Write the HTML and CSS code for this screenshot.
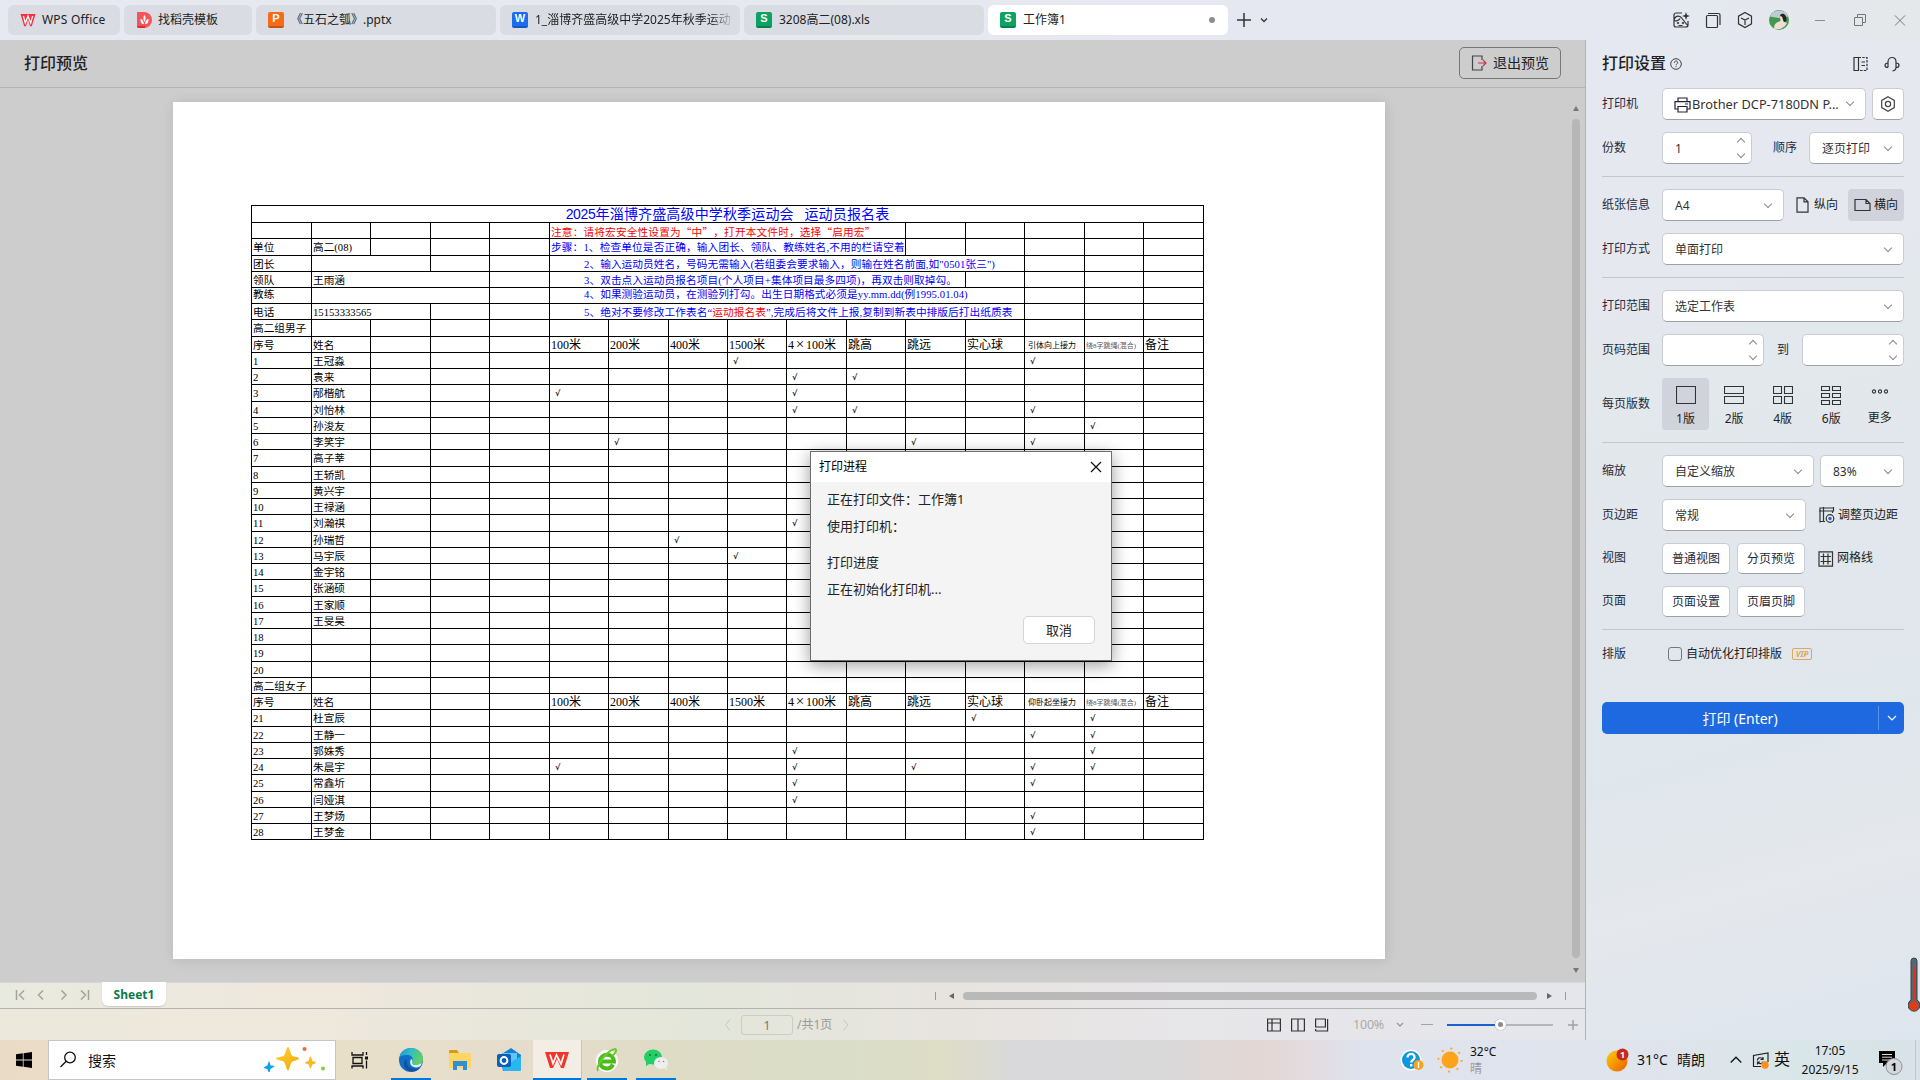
FILE: index.html
```html
<!DOCTYPE html>
<html lang="zh-CN">
<head>
<meta charset="utf-8">
<title>打印预览</title>
<link rel="stylesheet" href="styles.css">
</head>
<body>
<header class="tabbar">
  <div class="tab tab-home"><svg width="16" height="16" viewBox="0 0 16 16"><path d="M.5 2h15l-3.700 12.300h-1.800L8 7.500 6 14.300H4.200z" fill="#f5303d"/><path d="M3.400 4l1.900 7L8 4l2.700 7 1.900-7" fill="none" stroke="#fff" stroke-width="1.300"/></svg><span>WPS Office</span></div>
  <div class="tab tab-tpl"><svg width="16" height="16" viewBox="0 0 16 16"><path d="M1 0h7a8 8 0 0 1 0 16H3a2 2 0 0 1-2-2z" fill="#f4545a"/><path d="M1 14h8v2H3a2 2 0 0 1-2-2z" fill="#d93036"/><path d="M8.500 3c1.500 2 1.500 4 0 7-1.500-3-1.500-5 0-7zM4.500 7c2 0 3 2 3.500 5-3 0-3.500-2-3.500-5zm8 0c-2 0-3 2-3.500 5 3 0 3.500-2 3.500-5z" fill="#fff"/></svg><span>找稻壳模板</span></div>
  <div class="tab tab-doc"><i class="doc doc-p">P</i><span>《五石之瓠》.pptx</span></div>
  <div class="tab tab-doc"><i class="doc doc-w">W</i><span class="fade">1_淄博齐盛高级中学2025年秋季运动</span></div>
  <div class="tab tab-doc"><i class="doc doc-s">S</i><span>3208高二(08).xls</span></div>
  <div class="tab tab-doc active"><i class="doc doc-s">S</i><span>工作簿1</span><b class="dot"></b></div>
  <svg class="plus" width="40" height="16" viewBox="0 0 40 16" fill="none" stroke="#333"><path d="M8 1v14M1 8h14" stroke-width="1.500"/><path d="M25 6.500l3 3 3-3" stroke-width="1.300"/></svg>
  <div class="winctl">
    <svg width="18" height="18" viewBox="0 0 18 18" fill="none" stroke="#333" stroke-width="1.200"><path d="M10 2H4a2 2 0 0 0-2 2v10a2 2 0 0 0 2 2h10a2 2 0 0 0 2-2v-4M2 9.500C3 4 8 4 10 7.500l6 7.500M2 9.500c2 1 5 0 6-2M5 11.500l1 1 1-1M10 11.500l1 1 1-1M6.500 14.500h4"/><path d="M14 1l1 3 3 1-3 1-1 3-1-3-3-1 3-1z" fill="#333" stroke="none"/></svg>
    <svg width="18" height="18" viewBox="0 0 18 18" fill="none" stroke="#333" stroke-width="1.200"><rect x="2.500" y="4.500" width="11" height="12" rx="1"/><path d="M4 2.500h10.500a1.500 1.500 0 0 1 1.500 1.500V14"/></svg>
    <svg width="18" height="18" viewBox="0 0 18 18" fill="none" stroke="#333" stroke-width="1.200"><path d="M9 1.500l6.500 3.700v7.600L9 16.500l-6.500-3.700V5.200zM5 7l4 2 4-2M9 9v5"/></svg>
    <svg width="20" height="20" viewBox="0 0 20 20"><circle cx="10" cy="10" r="10" fill="#3f9a50"/><path d="M.8 6.500a10 10 0 0 1 18.400 0L10 8z" fill="#c0cad6"/><path d="M11 5c3-3 7 0 6.500 5.500L14 14l-1-4z" fill="#2b2022"/><path d="M11 6.500l2 0 1.500 5 3.500 1.500a10 10 0 0 1-13 5.500c0-3 1-5.500 4-6.500l2.500-1z" fill="#f0ded4"/></svg>
    <svg width="12" height="18" viewBox="0 0 12 18" stroke="#8a8c91" fill="none"><path d="M1 9.500h10"/></svg>
    <svg width="14" height="18" viewBox="0 0 14 18" stroke="#777" fill="none"><path d="M1.500 6.500h8v8h-8zM4.500 6V3.500h8v8H10"/></svg>
    <svg width="12" height="18" viewBox="0 0 12 18" stroke="#777" fill="none"><path d="M1 4.500l10 10M11 4.500l-10 10"/></svg>
  </div>
</header>
<div class="work">
  <section class="left">
    <div class="previewbar"><h1>打印预览</h1>
      <button class="exit"><svg width="17" height="16" viewBox="0 0 17 16" fill="none"><path d="M11 5V1H1.500v14H11v-4" stroke="#444" stroke-width="1.200"/><path d="M7 8h8M12 5l3 3-3 3" stroke="#c8354f" stroke-width="1.200"/></svg>退出预览</button>
    </div>
    <div class="canvas">
      <div class="paper">
        <table class="sheet">
          <colgroup><col class="w60"><col class="w59"><col class="w60"><col class="w59"><col class="w60"><col class="w59"><col class="w60"><col class="w59"><col class="w59"><col class="w60"><col class="w59"><col class="w60"><col class="w59"><col class="w60"><col class="w59"><col class="w60"></colgroup>
          <tbody>
          <tr><td colspan="16" class="title"><span>2025</span>年淄博齐盛高级中学秋季运动会<span>&nbsp;&nbsp;&nbsp;</span>运动员报名表</td></tr>
          <tr><td><td><td><td><td><td colspan="6" class="red cjk">注意：请将宏安全性设置为“中”，打开本文件时，选择“启用宏”<td><td><td><td><td></tr>
          <tr><td>单位<td>高二(08)<td><td><td><td colspan="6" class="blue">步骤：1、检查单位是否正确，输入团长、领队、教练姓名,不用的栏请空着<td><td><td><td><td></tr>
          <tr><td>团长<td colspan="2"><td><td><td colspan="8" class="blue in">2、输入运动员姓名，号码无需输入(若组委会要求输入，则输在姓名前面,如"0501张三")<td><td><td></tr>
          <tr><td>领队<td colspan="3">王雨涵<td><td colspan="7" class="blue in">3、双击点入运动员报名项目(个人项目+集体项目最多四项)，再双击则取掉勾。<td><td><td><td></tr>
          <tr class="up"><td>教练<td colspan="3"><td><td colspan="8" class="blue in">4、如果测验运动员，在测验列打勾。出生日期格式必须是yy.mm.dd(例1995.01.04)<td><td><td></tr>
          <tr><td>电话<td colspan="2">15153333565<td><td><td colspan="8" class="blue in">5、绝对不要修改工作表名“<span class="red">运动报名表</span>”,完成后将文件上报,复制到新表中排版后打出纸质表<td><td><td></tr>
          <tr><td class="nw">高二组男子<td><td><td><td><td><td><td><td><td><td><td><td><td><td><td></tr>
          <tr class="head"><td>序号<td>姓名<td><td><td><td>100米<td>200米<td>400米<td>1500米<td>4<span class="times">×</span>100米<td>跳高<td>跳远<td>实心球<td class="s8">引体向上接力<td class="s7">绕8字跳绳(混合)<td>备注</tr>
          <tr><td>1<td>王冠淼<td><td><td><td><td><td><td class="k">√<td><td><td><td><td class="k">√<td><td></tr>
          <tr><td>2<td>袁来<td><td><td><td><td><td><td><td class="k">√<td class="k">√<td><td><td><td><td></tr>
          <tr><td>3<td>邴楷航<td><td><td><td class="k">√<td><td><td><td class="k">√<td><td><td><td><td><td></tr>
          <tr><td>4<td>刘怡林<td><td><td><td><td><td><td><td class="k">√<td class="k">√<td><td><td class="k">√<td><td></tr>
          <tr><td>5<td>孙浚友<td><td><td><td><td><td><td><td><td><td><td><td><td class="k">√<td></tr>
          <tr><td>6<td>李笑宇<td><td><td><td><td class="k">√<td><td><td><td><td class="k">√<td><td class="k">√<td><td></tr>
          <tr><td>7<td>高子莘<td><td><td><td><td><td><td><td><td><td><td><td><td><td></tr>
          <tr><td>8<td>王轿凯<td><td><td><td><td><td><td><td><td><td><td><td><td><td></tr>
          <tr><td>9<td>黄兴宇<td><td><td><td><td><td><td><td><td><td><td><td><td><td></tr>
          <tr><td>10<td>王禄涵<td><td><td><td><td><td><td><td><td><td><td><td><td><td></tr>
          <tr><td>11<td>刘瀚祺<td><td><td><td><td><td><td><td class="k">√<td><td><td><td><td><td></tr>
          <tr><td>12<td>孙瑞哲<td><td><td><td><td><td class="k">√<td><td><td><td><td><td><td><td></tr>
          <tr><td>13<td>马宇辰<td><td><td><td><td><td><td class="k">√<td><td><td><td><td><td><td></tr>
          <tr><td>14<td>金宇铭<td><td><td><td><td><td><td><td><td><td><td><td><td><td></tr>
          <tr><td>15<td>张涵硕<td><td><td><td><td><td><td><td><td><td><td><td><td><td></tr>
          <tr><td>16<td>王家顺<td><td><td><td><td><td><td><td><td><td><td><td><td><td></tr>
          <tr><td>17<td>王旻昊<td><td><td><td><td><td><td><td><td><td><td><td><td><td></tr>
          <tr><td>18<td><td><td><td><td><td><td><td><td><td><td><td><td><td><td></tr>
          <tr><td>19<td><td><td><td><td><td><td><td><td><td><td><td><td><td><td></tr>
          <tr><td>20<td><td><td><td><td><td><td><td><td><td><td><td><td><td><td></tr>
          <tr><td class="nw">高二组女子<td><td><td><td><td><td><td><td><td><td><td><td><td><td><td></tr>
          <tr class="head"><td>序号<td>姓名<td><td><td><td>100米<td>200米<td>400米<td>1500米<td>4<span class="times">×</span>100米<td>跳高<td>跳远<td>实心球<td class="s8">仰卧起坐接力<td class="s7">绕8字跳绳(混合)<td>备注</tr>
          <tr><td>21<td>杜宣辰<td><td><td><td><td><td><td><td><td><td><td class="k">√<td><td class="k">√<td></tr>
          <tr><td>22<td>王静一<td><td><td><td><td><td><td><td><td><td><td><td class="k">√<td class="k">√<td></tr>
          <tr><td>23<td>郭姝秀<td><td><td><td><td><td><td><td class="k">√<td><td><td><td><td class="k">√<td></tr>
          <tr><td>24<td>朱晨宇<td><td><td><td class="k">√<td><td><td><td class="k">√<td><td class="k">√<td><td class="k">√<td class="k">√<td></tr>
          <tr><td>25<td>常鑫圻<td><td><td><td><td><td><td><td class="k">√<td><td><td><td class="k">√<td><td></tr>
          <tr><td>26<td>闫娅淇<td><td><td><td><td><td><td><td class="k">√<td><td><td><td><td><td></tr>
          <tr><td>27<td>王梦炀<td><td><td><td><td><td><td><td><td><td><td><td class="k">√<td><td></tr>
          <tr><td>28<td>王梦金<td><td><td><td><td><td><td><td><td><td><td><td class="k">√<td><td></tr>
          </tbody>
        </table>
      </div>
      <div class="vscroll"><i class="tri up-tri"></i><b></b><i class="tri down-tri"></i></div>
    </div>
    <div class="sheetbar">
      <svg width="78" height="14" viewBox="0 0 78 14" fill="none" stroke="#a3a29d" stroke-width="1.500"><path d="M1.500 2v10M9 2.500L4.500 7 9 11.500M28 2.500L23.500 7l4.500 4.500M46.500 2.500L51 7l-4.500 4.500M66 2.500L70.500 7 66 11.500M73.500 2v10"/></svg>
      <div class="sheettab">Sheet1</div>
      <div class="hscroll"><i class="sep"></i><i class="tri left-tri"></i><b></b><i class="tri right-tri"></i><i class="sep"></i></div>
    </div>
    <div class="status">
      <svg class="pg" width="8" height="14" viewBox="0 0 8 14" fill="none" stroke="#c6c8c8"><path d="M6 1.500L1.500 7 6 12.500"/></svg>
      <span class="pginput">1</span><span class="pgtext">/共1页</span>
      <svg class="pg" width="8" height="14" viewBox="0 0 8 14" fill="none" stroke="#c6c8c8"><path d="M1.500 1.500L6 7l-4.500 5.500"/></svg>
      <svg class="views" width="62" height="14" viewBox="0 0 62 14" fill="none" stroke="#333" stroke-width="1.200"><path d="M.6 1h12.800v12H.6zM.6 5h12.800M5 1v12M24.600 1h12.800v12H24.600zM31 1v12M48.600 1h9.800v8h-9.800zM48.600 13h12V1M48.600 11v2"/></svg>
      <span class="zoom">100%</span>
      <svg class="zv" width="8" height="6" viewBox="0 0 8 6" fill="none" stroke="#999" stroke-width="1.300"><path d="M1 1l3 3 3-3"/></svg>
      <i class="minus"></i>
      <div class="slider"><b></b></div>
      <svg class="zp" width="12" height="12" viewBox="0 0 12 12" stroke="#a0a0a2" stroke-width="1.500"><path d="M6 1v10M1 6h10"/></svg>
    </div>
  </section>
  <aside class="panel">
    <div class="ptitle"><h2>打印设置</h2><svg width="12" height="12" viewBox="0 0 12 12" fill="none" stroke="#444"><circle cx="6" cy="6" r="5.300"/><path d="M4.300 4.800c0-2.300 3.400-2.300 3.400-.2C7.700 6 6 5.800 6 7.200M6 8.200v1"/></svg>
      <svg class="pi1" width="15" height="16" viewBox="0 0 15 16" fill="none" stroke="#333" stroke-width="1.200"><path d="M5.500 1.500H1v13h4.500zM8.500 6h3.500M8.500 9.500h3.500"/><path d="M5.500 1.500H14v13H5.500" stroke-dasharray="2.500 1.200"/></svg>
      <svg width="16" height="16" viewBox="0 0 16 16" fill="none" stroke="#333" stroke-width="1.200"><path d="M4 11.500V6c0-6 8-6 8 0v5.500M4 7c-4 0-4 4.500 0 4.500M12 7c4 0 4 4.500 0 4.500M12 11.500c0 2-1 3-3.500 3.500"/></svg></div>
    <div class="row r1"><label>打印机</label><div class="box grow p12"><svg width="17" height="16" viewBox="0 0 17 16" fill="none" stroke="#223" stroke-width="1.200"><path d="M4 4.500V1h9v3.500M4 12H1V4.600h15V12h-3M4 9.500h9V15H4zM11 7h3"/></svg><span class="brother">Brother DCP-7180DN P...</span><i class="chev"></i></div><div class="box sq"><svg width="16" height="16" viewBox="0 0 16 16" fill="none" stroke="#444" stroke-width="1.200"><path d="M8 .8l6.300 3.600v7.200L8 15.200l-6.300-3.600V4.400z"/><circle cx="8" cy="8" r="2.600"/></svg></div></div>
    <div class="row"><label>份数</label><div class="box w90">1<i class="spin"></i></div><label class="mid">顺序</label><div class="box w95">逐页打印<i class="chev"></i></div></div>
    <hr>
    <div class="row"><label>纸张信息</label><div class="box w122">A4<i class="chev"></i></div><div class="orient"><svg width="13" height="16" viewBox="0 0 13 16" fill="none" stroke="#333" stroke-width="1.200"><path d="M1 .8h7l4 4v10.400H1zM8 .8v4h4"/></svg>纵向</div><div class="orient on"><svg width="17" height="14" viewBox="0 0 17 14" fill="none" stroke="#333" stroke-width="1.200"><path d="M1 1.500h11l4 4v7H1zM12 1.500v4h4"/></svg>横向</div></div>
    <div class="row"><label>打印方式</label><div class="box grow">单面打印<i class="chev"></i></div></div>
    <hr>
    <div class="row"><label>打印范围</label><div class="box grow">选定工作表<i class="chev"></i></div></div>
    <div class="row"><label>页码范围</label><div class="box w102"><i class="spin"></i></div><label class="to">到</label><div class="box w102"><i class="spin"></i></div></div>
    <div class="row tall"><label>每页版数</label>
      <div class="nup on"><svg width="20" height="20" viewBox="0 0 20 20"><path d="M.500 1.500h19v17H.500z"/></svg>1版</div>
      <div class="nup"><svg width="20" height="20" viewBox="0 0 20 20"><path d="M.500 1.500h19v7H.500zM.500 11.500h19v7H.500z"/></svg>2版</div>
      <div class="nup"><svg width="20" height="20" viewBox="0 0 20 20"><path d="M.500 1.500h8v7h-8zM11.500 1.500h8v7h-8zM.500 11.500h8v7h-8zM11.500 11.500h8v7h-8z"/></svg>4版</div>
      <div class="nup"><svg width="20" height="20" viewBox="0 0 20 20"><path d="M.500 1.500h8v4h-8zM11.500 1.500h8v4h-8zM.500 8.500h8v4h-8zM11.500 8.500h8v4h-8zM.500 15.500h8v4h-8zM11.500 15.500h8v4h-8z"/></svg>6版</div>
      <div class="nup more"><svg width="20" height="20" viewBox="0 0 20 20"><circle cx="4" cy="6.500" r="1.600"/><circle cx="10" cy="6.500" r="1.600"/><circle cx="16" cy="6.500" r="1.600"/></svg>更多</div>
    </div>
    <hr>
    <div class="row"><label>缩放</label><div class="box grow">自定义缩放<i class="chev"></i></div><div class="box w84">83%<i class="chev"></i></div></div>
    <div class="row"><label>页边距</label><div class="box w144">常规<i class="chev"></i></div><div class="link"><svg width="16" height="16" viewBox="0 0 16 16" fill="none" stroke="#333" stroke-width="1.200"><path d="M1 15.500V1h14M4.500 0v15M0 4h14.500V0M13.500 4v2M1 14.500h5"/><circle cx="11" cy="11.500" r="3.800"/><circle cx="11" cy="11.500" r="1.700" fill="#2c62e0" stroke="none"/></svg>调整页边距</div></div>
    <div class="row short"><label>视图</label><div class="box btn">普通视图</div><div class="box btn">分页预览</div><div class="link l2"><svg width="16" height="16" viewBox="0 0 16 16" fill="none" stroke="#333" stroke-width="1.200"><path d="M1 .800h13.500v14.400H1zM5.500 2.500v11M10 2.500v11M2.500 5.500h10.500M2.500 10.500h10.500"/></svg>网格线</div></div>
    <div class="row short"><label>页面</label><div class="box btn">页面设置</div><div class="box btn">页眉页脚</div></div>
    <hr>
    <div class="row opt"><label>排版</label><i class="check"></i><span>自动优化打印排版</span><em>VIP</em></div>
    <div class="print"><span>打印 (Enter)</span><i><svg width="10" height="6" viewBox="0 0 10 6" fill="none" stroke="#fff" stroke-width="1.200"><path d="M1 1l4 4 4-4"/></svg></i></div>
  </aside>
</div>
<footer class="taskbar">
  <svg class="start" width="16" height="16" viewBox="0 0 16 16"><path d="M0 2.300L6.800 1.300v6.300H0zM7.600 1.200L16 0v7.600H7.600zM0 8.400h6.800v6.300L0 13.700zM7.600 8.400H16V16l-8.400-1.200z"/></svg>
  <div class="search"><svg width="18" height="18" viewBox="0 0 18 18" fill="none" stroke="#111" stroke-width="1.300"><circle cx="11" cy="6.500" r="5.300"/><path d="M7.200 10.300L1.500 16"/></svg><span>搜索</span>
    <svg class="spark" width="62" height="26" viewBox="0 0 62 26"><defs><linearGradient id="g" x1="0" y1="0" x2="1" y2="1"><stop offset="0" stop-color="#ffd83a"/><stop offset="1" stop-color="#f0a20c"/></linearGradient></defs><path d="M24 1c1.500 0 2.500 7 4 8.500S35 11 35 12.500 30 14.500 28 16s-2.500 8.500-4 8.500-2.500-7-4-8.500-8-2-8-3.500 6.500-1.500 8-3S22.500 1 24 1z" fill="url(#g)"/><path d="M46.500 10.500c1 0 1.200 3.500 2 4.300s3.500 1 3.500 1.900-2.500 1-3.500 1.900-1 4-2 4-1.200-3.100-2-4-3.500-1-3.500-1.900 2.700-1.100 3.500-1.900 1-4.300 2-4.300z" fill="#f9bb22"/><path d="M5 17l1 3 3 .5-3 2-1 3-1-3-3-1 3-1.500z" fill="#12a0ea" stroke="#12a0ea" stroke-width="1.500"/><circle cx="40.500" cy="3" r="2" fill="#f06a35"/><circle cx="59" cy="22.500" r="2" fill="#8bc83e"/></svg></div>
  <div class="app tv"><svg width="18" height="18" viewBox="0 0 18 18" fill="none" stroke="#111" stroke-width="1.300"><path d="M1 1v3h11V1M2 6.500h9v6H2zM1 17.500V15h11v2.500M15.500 1v3M15.500 9.500v8"/><path d="M14 5.500h3v3h-3z" fill="#111" stroke="none"/></svg></div>
  <div class="app run"><svg width="26" height="26" viewBox="0 0 26 26"><defs><linearGradient id="e" x1="0" y1="0" x2="1" y2=".4"><stop offset="0" stop-color="#1b8fd8"/><stop offset=".5" stop-color="#31bfc4"/><stop offset="1" stop-color="#62d060"/></linearGradient></defs><circle cx="13" cy="13" r="12" fill="#0f6fc8"/><path d="M1.300 11C3 3 9 1 13 1c8 0 12 6 12 11 0 4-3 6-7 6-3 0-5-1-4-3 2-3 0-7-4-7S3 8 1.300 11z" fill="url(#e)"/><path d="M9 12c-2 7 4 12 13 9-5 6-15 4-16-3-.500-3 1-5 3-6z" fill="#174f9a"/><path d="M13 12c3 1 0 3 1.500 5 2 2 6 1 9-1 0 3-2 4-5 4.500-5 0-8-4-5.500-8.500z" fill="#e4f1f4"/></svg></div>
  <div class="app"><svg width="24" height="22" viewBox="0 0 24 22"><path d="M1 2a1 1 0 0 1 1-1h7l2 3H1z" fill="#d79a14"/><path d="M1 4h22v15H1z" fill="#ffd663"/><path d="M5 12h14v9h-4v-4H9v4H5z" fill="#2f8ed8"/></svg></div>
  <div class="app"><svg width="26" height="26" viewBox="0 0 26 26"><path d="M4 8l11-7 10 7v14a2 2 0 0 1-2 2H7z" fill="#1380d8"/><path d="M7 6h14v9H7z" fill="#5cc8f8"/><path d="M25 9L7 20v2a2 2 0 0 0 2 2h14a2 2 0 0 0 2-2z" fill="#28b7f0"/><rect x="1" y="7" width="14" height="13" rx="2" fill="#0a5fb8"/><circle cx="8" cy="13.500" r="3.400" fill="none" stroke="#fff" stroke-width="2"/></svg></div>
  <div class="app run cur"><svg width="26" height="20" viewBox="0 0 26 20"><path d="M1 2h24l-5 16h-3L13 9 9 18H6z" fill="#f43428"/><path d="M6 4.500l3 9L12.500 5l4.500 9 3-9.500" fill="none" stroke="#fff" stroke-width="1.700"/></svg></div>
  <div class="app run"><svg width="26" height="26" viewBox="0 0 26 26"><circle cx="13" cy="14" r="11" fill="#fff"/><path d="M6 14.500h14c0-9-14-9-14 0 0 8 10 9 13 3" fill="none" stroke="#4dbb1d" stroke-width="4"/><path d="M4 24C1 20 13 3 21 2c3 1-1 6-3 7" fill="none" stroke="#6acb30" stroke-width="2"/></svg></div>
  <div class="app run wx"><svg width="26" height="22" viewBox="0 0 26 22"><ellipse cx="10" cy="8" rx="9" ry="7.500" fill="#20cf66"/><path d="M3 12v5l5-3z" fill="#20cf66"/><ellipse cx="18" cy="14" rx="7" ry="6" fill="#eee"/><path d="M20 18l4 3-1-5z" fill="#eee"/><g fill="#176b39"><circle cx="7" cy="6" r="1"/><circle cx="13" cy="6" r="1"/></g><g fill="#888"><circle cx="16" cy="12.500" r=".8"/><circle cx="20.500" cy="12.500" r=".8"/></g></svg></div>
  <div class="tray">
    <svg class="help" width="24" height="22" viewBox="0 0 24 22"><circle cx="11" cy="11" r="10.500" fill="#fff"/><circle cx="11" cy="11" r="9" fill="#0e97dc"/><path d="M7.500 8.500c0-5 7.500-4.500 7 0-.2 2.500-3.300 2.300-3.300 5M11.200 15v2.500" fill="none" stroke="#fff" stroke-width="2.300"/><circle cx="18.500" cy="16" r="5" fill="#f5a51d"/><path d="M18.500 13v6" stroke="#fff" stroke-width="1.300"/></svg>
    <svg class="sun" width="26" height="26" viewBox="0 0 26 26"><circle cx="13" cy="13" r="8.500" fill="#ffa31a"/><circle cx="13" cy="13" r="11.600" fill="none" stroke="#ffab16" stroke-width="2" stroke-dasharray="2 7.110"/></svg>
    <div class="w1"><span>32°C</span><span class="dim">晴</span></div>
    <svg class="ball" width="26" height="26" viewBox="0 0 26 26"><defs><linearGradient id="b" x1="0" y1="0" x2="1" y2="1"><stop offset="0" stop-color="#ffd000"/><stop offset="1" stop-color="#e85c00"/></linearGradient></defs><circle cx="12" cy="14" r="10.500" fill="url(#b)"/><circle cx="17.500" cy="7.500" r="6" fill="#c42b1c"/><text x="17.500" y="11" text-anchor="middle" font-size="9" fill="#fff" font-weight="700">1</text></svg>
    <span class="temp">31°C</span><span class="sky">晴朗</span>
    <svg class="caret" width="12" height="8" viewBox="0 0 12 8" fill="none" stroke="#111" stroke-width="1.300"><path d="M.700 6.500L6 1.200l5.300 5.300"/></svg>
    <svg class="sync" width="18" height="17" viewBox="0 0 18 17" fill="none" stroke="#222" stroke-width="1.200"><path d="M9 14.500H1.500V3.500L16 1v9M5.500 8.500c0-3.500 4-3.500 5.500-1M11 5v2.500H8.500M11 9.500c-.5 2.500-4 3-5.500.500M5.500 12.500V10H8"/><circle cx="13" cy="13" r="3.700" fill="#ff8d1a" stroke="none"/></svg>
    <span class="ime">英</span>
    <div class="clock"><span>17:05</span><span>2025/9/15</span></div>
    <svg class="note" width="26" height="26" viewBox="0 0 26 26"><path d="M1 2h16v12H9l-4 4v-4H1z" fill="#000"/><path d="M4 5.500h10M4 8.200h10M4 11h10" stroke="#ddd"/><circle cx="16" cy="17.500" r="8" fill="#d3d8db" stroke="#8b9194"/><text x="16" y="21.500" text-anchor="middle" font-size="11" font-weight="700">1</text></svg>
  </div>
</footer>
<svg class="thermo" width="12" height="60" viewBox="0 0 12 60"><path d="M3 5a3 3 0 0 1 6 0v39a6 6 0 1 1-6 0z" fill="#57666f" stroke="#34434c"/><path d="M6 11v35" stroke="#e0321b" stroke-width="2"/><circle cx="6" cy="50" r="4.500" fill="#e53a16"/></svg>
<div class="dialog">
  <div class="dtitle">打印进程<svg width="12" height="12" viewBox="0 0 12 12" stroke="#111" stroke-width="1.200"><path d="M1 1l10 10M11 1L1 11"/></svg></div>
  <div class="dbody"><p>正在打印文件：工作簿1</p><p>使用打印机：</p><p class="gap">打印进度</p><p>正在初始化打印机...</p><button>取消</button></div>
</div>
</body>
</html>
```
FILE: styles.css
```css
* { box-sizing: border-box; }
body { margin: 0; width: 1920px; height: 1080px; overflow: hidden; position: relative; display: flex; flex-direction: column; font: 12px/1.2 "Noto Sans", "Noto Sans CJK SC", sans-serif; color: #222; background: #e6e9f1; text-spacing-trim: space-all; }
svg { display: block; flex: none; }
h1, h2, p { margin: 0; }
button { font: inherit; color: inherit; }

.tabbar { height: 40px; padding: 5px 0 5px 8px; display: flex; gap: 4px; align-items: center; background: linear-gradient(90deg, #e6e9f1 0 35%, #e7e9ed 45%, #e5e8f1 60% 85%, #e4e8ea); }
.tab { height: 30px; border-radius: 6px; background: #d9dce3; display: flex; align-items: center; gap: 6px; padding-left: 12px; white-space: nowrap; }
.tab-home { width: 112px; letter-spacing: .2px; }
.tab-tpl { width: 128px; }
.tab-doc { width: 240px; gap: 7px; }
.tab.active { background: #fff; }
.fade { width: 200px; -webkit-mask: linear-gradient(90deg, #000 88%, transparent); mask: linear-gradient(90deg, #000 88%, transparent); }
.doc { width: 16px; height: 16px; border-radius: 2px; flex: none; color: #fff; font: bold 11px/13px "Liberation Sans", sans-serif; text-align: center; border-bottom: 2px solid #0003; }
.doc-p { background: #f76b17; }
.doc-w { background: #1c6cf2; }
.doc-s { background: #0ca261; }
.dot { width: 6px; height: 6px; border-radius: 3px; background: #8d8d8d; margin-left: auto; margin-right: 13px; }
.plus { margin-left: 4px; }
.winctl { margin-left: auto; display: flex; align-items: center; margin-right: 14px; }
.winctl svg:nth-child(-n+2) { margin-right: 14px; }
.winctl svg:nth-child(3) { margin-right: 15px; }
.winctl svg:nth-child(4) { margin-right: 25px; }
.winctl svg:nth-child(5) { margin-right: 27px; }
.winctl svg:nth-child(6) { margin-right: 27px; }

.work { height: 1000px; display: flex; }
.left { width: 1586px; border-right: 1px solid #b2b3b6; display: flex; flex-direction: column; }
.previewbar { height: 48px; background: #cdcdcd; border-bottom: 1px solid #b4b4b4; display: flex; align-items: center; justify-content: space-between; padding: 0 24px; }
.previewbar h1 { font-size: 16px; font-weight: 500; }
.exit { width: 102px; height: 32px; margin-bottom: 1px; border: 1px solid #777; border-radius: 5px; background: none; font-size: 14px; display: flex; align-items: center; gap: 5px; padding: 0 0 0 11px; white-space: nowrap; }
.canvas { height: 894px; background: #cdcdcd; display: flex; padding: 14px 3px 0 173px; justify-content: space-between; }
.paper { width: 1212px; height: 857px; background: #fff; box-shadow: 1px 1px 12px #0000001c; padding: 103px 0 0 78px; }
.sheet { width: 953px; table-layout: fixed; border-collapse: separate; border-spacing: 0; border: solid #000; border-width: 1px 0 0 1px; font: 10.67px/13px "Liberation Serif", "Noto Sans CJK SC", serif; color: #000; }
.w60 { width: 60px; }
.w59 { width: 59px; }
.sheet td { height: 16px; padding: 1px 0 0 1px; border: solid #000; border-width: 0 1px 1px 0; white-space: nowrap; vertical-align: middle; }
.sheet tr:nth-child(1) td, .sheet tr:nth-child(3) td, .sheet tr:nth-child(4n+8) td { height: 17px; }
.sheet td.title { text-align: center; padding: 0; font: 14px/15px "Liberation Sans", "Noto Sans CJK SC", sans-serif; color: #00f; letter-spacing: .15px; }
.title span { letter-spacing: -.3px; }
.sheet .red { color: #f00; }
.sheet .blue { color: #00f; letter-spacing: .14px; }
.sheet td.cjk { font-family: "Noto Sans CJK SC", sans-serif; letter-spacing: .16px; }
.sheet td.in { padding-left: 34px; letter-spacing: .08px; }
.sheet .up td { padding-top: 0; line-height: 11px; padding-bottom: 2px; }
.sheet .head td:nth-child(n+6) { font: 12px/14px "Liberation Serif", "Noto Sans CJK SC", serif; padding: 0 0 0 1px; }
.times { display: inline-block; width: 12px; text-align: center; font-size: 15px; line-height: 10px; }
.sheet .head td.s8:nth-child(n+6) { font-size: 8px; padding: 2px 0 0 3px; line-height: 10px; }
.sheet .head td.s7:nth-child(n+6) { font-size: 7px; padding: 3px 0 0 1px; line-height: 10px; color: #555; }
.sheet td.k { font: 700 8px/12px "DejaVu Sans", sans-serif; padding-left: 5px; padding-top: 2px; color: #222; }
.vscroll { width: 12px; height: 873px; display: flex; flex-direction: column; align-items: center; gap: 8px; padding-top: 4px; }
.vscroll b { width: 8px; flex: 1; background: #b7b7b7; border-radius: 4px; }
.tri { width: 0; height: 0; border: 3px solid transparent; flex: none; }
.up-tri { border-bottom: 5px solid #777; border-top: 0; }
.down-tri { border-top: 5px solid #777; border-bottom: 0; margin: 2px 0; }
.left-tri { border-right: 5px solid #666; border-left: 0; }
.right-tri { border-left: 5px solid #666; border-right: 0; }
.sheetbar { height: 27px; border-top: 1px solid #d8d8d6; border-bottom: 1px solid #b3b3b1; display: flex; padding-left: 15px; background: linear-gradient(90deg, #e9eadf, #efe8dd 20%, #e3e6da 43%, #e7e4df 60%, #e7e6e9 75%, #e5e6ec); }
.sheetbar > svg { margin-top: 5px; }
.sheettab { width: 64px; height: 24px; margin: -1px 0 0 9px; background: #fff; border-radius: 0 0 6px 6px; box-shadow: 0 1px 1px #0002; color: #0b7a4b; font: 700 12px/25px "Noto Sans", sans-serif; text-align: center; }
.hscroll { margin-left: auto; display: flex; align-items: center; height: 25px; padding-right: 19px; }
.hscroll b { width: 574px; height: 8px; border-radius: 4px; background: #b9b9b9; margin: 0 10px 0 9px; }
.sep { width: 1px; height: 8px; background: #999; }
.sep:first-child { margin-right: 13px; }
.sep:last-child { margin-left: 13px; }
.status { height: 31px; display: flex; align-items: center; padding-left: 724px; color: #999; background: linear-gradient(90deg, #ece8dc, #efe8dd 18%, #e3e6da 45%, #e7e4df 60%, #e7e6e9 75%, #e5e6ec); }
.pginput { width: 52px; height: 20px; margin: 0 4px 0 9px; border: 1px solid #cbccc4; border-radius: 3px; text-align: center; line-height: 19px; color: #777; }
.pgtext { width: 36px; margin-right: 9px; white-space: nowrap; padding-top: 1px; }
.views { margin-left: 417px; }
.zoom { margin-left: 24px; width: 32px; font-size: 12.5px; color: #aaa; letter-spacing: -.2px; }
.zv { margin-left: 11px; }
.minus { width: 12px; height: 1.500px; background: #a4a4a6; margin-left: 17px; }
.slider { width: 106px; height: 2px; margin-left: 14px; background: linear-gradient(90deg, #1d5fce 50%, #b5b5b8 50%); display: flex; justify-content: center; align-items: center; }
.slider b { width: 11px; height: 11px; flex: none; border-radius: 50%; background: #8a8a8a; border: 3px solid #fff; box-shadow: 0 0 1px #777; }
.zp { margin-left: 14px; }

.panel { width: 334px; padding: 0 16px; background: linear-gradient(165deg, #e6e8f1 0, #e5e8ef 25%, #e2e8eb 35%, #e1e7ed 50%, #e0e7ec 70%, #e5e8ec 82%, #dde5ee); }
.ptitle { height: 48px; display: flex; align-items: center; gap: 4px; padding-right: 4px; }
.ptitle h2 { font-size: 16px; font-weight: 500; }
.pi1 { margin-left: auto; margin-right: 12px; }
.row { height: 32px; display: flex; align-items: center; margin-bottom: 12px; white-space: nowrap; }
.row label { width: 60px; flex: none; color: #252b3b; }
.row .mid { width: 57px; padding-left: 21px; }
.row .to { width: 38px; padding-left: 13px; }
.panel hr { height: 1px; border: 0; margin: 0 0 12px; background: #c3c6cb; }
.box { height: 32px; border: 1px solid #c9ccd2; border-bottom-color: #9da0a6; border-radius: 5px; background: #fff; display: flex; align-items: center; padding: 2px 12px 0; color: #333; }
.grow { flex: 1; }
.box.p12 { padding-left: 11px; padding-top: 1px; }
.brother { font-size: 12.800px; margin-left: 1px; }
.box.sq { width: 32px; padding: 0; justify-content: center; margin-left: 6px; }
.w90 { width: 90px; }
.w95 { width: 95px; }
.w122 { width: 122px; }
.w102 { width: 102px; }
.w84 { width: 84px; margin-left: 6px; }
.w144 { width: 144px; }
.chev { width: 6px; height: 6px; border: solid #888; border-width: 0 1px 1px 0; transform: rotate(45deg); margin: -5px 0 0 auto; }
.spin { margin-left: auto; margin-right: -5px; height: 24px; display: flex; flex-direction: column; justify-content: space-between; padding: 2px 0 4px; }
.spin::before, .spin::after { content: ""; width: 5px; height: 5px; border: solid #888; border-width: 1px 0 0 1px; transform: rotate(45deg); }
.spin::after { transform: rotate(225deg); }
.orient { height: 32px; display: flex; align-items: center; gap: 5px; padding-left: 12px; width: 64px; }
.orient.on { width: 56px; padding-left: 6px; gap: 3px; background: #d0d3db; border-radius: 4px; }
.tall { height: 52px; }
.nup { width: 47px; height: 52px; display: flex; flex-direction: column; align-items: center; gap: 7px; padding-top: 7px; border-radius: 4px; margin-right: 1.600px; }
.nup.on { background: #d0d3db; }
.nup svg { fill: none; stroke: #333; stroke-width: 1.100; }
.nup.more { gap: 6px; margin-right: 0; }
.link { display: flex; align-items: center; gap: 3px; margin-left: 13px; }
.row.short { height: 31px; }
.row .btn { width: 68px; height: 31px; padding: 1px 0 0; justify-content: center; margin-right: 7px; color: #242b3d; }
.l2 { margin-left: 6px; }
.opt { height: 24px; margin-bottom: 36px; }
.check { width: 14px; height: 14px; margin: 0 4px 0 6px; border: 1px solid #777; border-radius: 3px; }
.opt em { width: 20px; height: 12px; margin-left: 10px; border: 1px solid #dfa65c; border-radius: 2px; color: #dfa65c; font: italic 700 8px/10px "Noto Sans", sans-serif; text-align: center; }
.print { height: 32px; border-radius: 5px; background: #1e69e0; color: #fff; font-size: 14px; display: flex; align-items: center; }
.print span { flex: 1; text-align: center; padding-top: 2px; }
.print i { width: 26px; height: 24px; border-left: 1px solid #5b93ea; display: flex; align-items: center; justify-content: center; }

.taskbar { height: 40px; display: flex; align-items: center; color: #111; background: linear-gradient(90deg, #eadbc6, #e8dfc9 18%, #e6dccd 27%, #dedcc5 35%, #dadec8 44%, #deddc6 49%, #d9d9dc 53%, #d9d9da 60%, #e4d7d5 66%, #dfe3ee 71%, #e0e4ed 85%, #d9e6e8 94%, #d8e2e8); }
.start { margin: 0 16px; }
.search { width: 288px; height: 40px; background: #fff; border: 1px solid #c5c5c5; display: flex; align-items: center; padding-left: 10px; font-size: 14px; }
.search span { margin-left: 11px; padding-top: 2px; }
.spark { margin: -3px 9px 0 auto; }
.app { width: 49px; flex: none; height: 40px; display: flex; align-items: center; justify-content: center; }
.app.tv { width: 50px; padding-right: 2px; }
.run { background: linear-gradient(#0078d7, #0078d7) center bottom / 40px 2px no-repeat; }
.cur { background: linear-gradient(#0078d7, #0078d7) center bottom / 49px 2px no-repeat, #f2eee6; border-right: 1px solid #c9c4b5; }
.tray { margin-left: auto; display: flex; align-items: center; height: 40px; width: 520px; border-right: 1px solid #bcc6cb; margin-right: 4px; }
.help { margin-left: 4px; }
.sun { margin-left: 13px; }
.w1 { margin-left: 7px; width: 135px; display: flex; flex-direction: column; line-height: 17px; }
.dim { color: #999; }
.temp { font-size: 14px; width: 40px; margin-left: 6px; }
.sky { font-size: 14px; width: 28px; }
.caret { margin-left: 25px; }
.sync { margin-left: 10px; }
.ime { font-size: 16px; margin-left: 4px; }
.clock { width: 80px; display: flex; flex-direction: column; text-align: center; line-height: 19px; }
.note { margin-left: 8px; margin-top: 4px; }

.thermo { position: absolute; left: 1908px; top: 956px; }
.dialog { position: absolute; left: 810px; top: 451px; width: 302px; height: 210px; border: 1px solid #6e6e6e; background: #f4f4f4; box-shadow: 0 4px 16px #0006; font-size: 13px; }
.dtitle { height: 30px; background: #fff; font-size: 12px; color: #000; display: flex; align-items: center; justify-content: space-between; padding: 0 9px 0 8px; }
.dbody { padding: 8px 16px 0 16px; display: flex; flex-direction: column; line-height: 18px; }
.dbody p { margin-bottom: 9px; }
.dbody .gap { margin-top: 9px; }
.dbody button { width: 72px; height: 28px; align-self: flex-end; margin-top: 9px; border: 1px solid #d5d5d5; border-radius: 5px; background: #fff; padding: 0 0 1px; }
```
